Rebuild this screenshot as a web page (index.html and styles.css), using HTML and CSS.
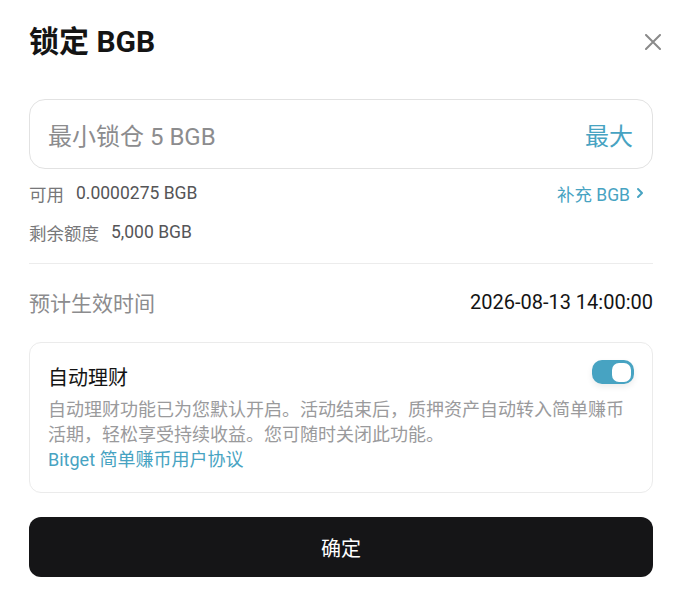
FILE: index.html
```html
<!DOCTYPE html>
<html lang="zh-CN">
<head>
<meta charset="utf-8">
<title>锁定 BGB</title>
<link rel="stylesheet" href="styles.css">
</head>
<body>
<div class="modal">
  <div class="header">
    <h1 class="title">锁定 BGB</h1>
    <button class="close" aria-label="关闭">
      <svg width="16" height="16" viewBox="0 0 16 16"><path d="M1 1L15 15M15 1L1 15" stroke="#8a8a8a" stroke-width="2" stroke-linecap="round"/></svg>
    </button>
  </div>

  <div class="input-box">
    <span class="placeholder">最小锁仓 5 BGB</span>
    <span class="max">最大</span>
  </div>

  <div class="info-row">
    <span class="label">可用</span><span class="value">0.0000275 BGB</span>
    <a class="topup">补充 BGB <svg width="8" height="12" viewBox="0 0 8 12"><path d="M2 2L6 6L2 10" fill="none" stroke="#47a3c2" stroke-width="2" stroke-linecap="round" stroke-linejoin="round"/></svg></a>
  </div>
  <div class="info-row second">
    <span class="label">剩余额度</span><span class="value">5,000 BGB</span>
  </div>

  <div class="divider"></div>

  <div class="time-row">
    <span class="time-label">预计生效时间</span>
    <span class="time-value">2026-08-13 14:00:00</span>
  </div>

  <div class="card">
    <div class="card-head">
      <span class="card-title">自动理财</span>
      <span class="toggle"><span class="knob"></span></span>
    </div>
    <p class="card-desc">自动理财功能已为您默认开启。活动结束后，质押资产自动转入简单赚币活期，轻松享受持续收益。您可随时关闭此功能。</p>
    <a class="card-link">Bitget 简单赚币用户协议</a>
  </div>

  <button class="confirm">确定</button>
</div>
</body>
</html>
```

FILE: styles.css
```css
* { box-sizing: border-box; }
html, body {
  margin: 0;
  padding: 0;
  background: #ffffff;
}
body {
  font-family: Roboto, "Noto Sans CJK SC", sans-serif;
  color: #141414;
}
.modal {
  width: 624px;
  margin-left: 29px;
  padding-top: 24px;
}
.header {
  display: flex;
  justify-content: space-between;
  align-items: center;
  height: 36px;
}
.title {
  margin: 0;
  font-size: 30px;
  font-weight: 700;
  line-height: 36px;
  color: #141414;
}
.close {
  border: 0;
  background: none;
  padding: 0;
  width: 16px;
  height: 16px;
  margin-right: -8px;
  display: flex;
}
.input-box {
  margin-top: 39px;
  height: 70px;
  border: 1px solid #e2e2e2;
  border-radius: 16px;
  display: flex;
  align-items: center;
  justify-content: space-between;
  padding: 0 19px 0 18px;
}
.placeholder {
  font-size: 24px;
  color: #8c8c8e;
}
.max {
  font-size: 24px;
  color: #47a3c2;
}
.info-row {
  margin-top: 12px;
  height: 24px;
  display: flex;
  align-items: center;
  font-size: 17.5px;
}
.info-row.second {
  margin-top: 15px;
}
.label {
  color: #777779;
  margin-right: 12px;
}
.value {
  color: #555557;
}
.topup {
  margin-left: auto;
  margin-right: 9px;
  color: #47a3c2;
  display: flex;
  align-items: center;
  gap: 6px;
}
.divider {
  margin-top: 19px;
  height: 1px;
  background: #ececec;
}
.time-row {
  margin-top: 24px;
  height: 28px;
  display: flex;
  align-items: center;
  justify-content: space-between;
}
.time-label {
  font-size: 21px;
  color: #8c8c8e;
}
.time-value {
  font-size: 20px;
  color: #141414;
}
.card {
  margin-top: 26px;
  border: 1px solid #ebebeb;
  border-radius: 12px;
  padding: 19px 18px 20px 18px;
}
.card-head {
  display: flex;
  justify-content: space-between;
  align-items: center;
  height: 28px;
}
.card-title {
  font-size: 20px;
  color: #141414;
}
.toggle {
  width: 42px;
  height: 24px;
  border-radius: 10px;
  background: #47a3c2;
  display: flex;
  align-items: center;
  justify-content: flex-end;
  padding-right: 3px;
  margin-top: -8px;
  box-shadow: 0 3px 6px rgba(0, 0, 0, 0.08);
}
.knob {
  width: 19px;
  height: 19px;
  border-radius: 7px;
  background: #ffffff;
}
.card-desc {
  margin: 7px 0 0;
  font-size: 18px;
  line-height: 25px;
  color: #9a9a9c;
}
.card-link {
  display: block;
  font-size: 18px;
  line-height: 25px;
  color: #47a3c2;
}
.confirm {
  margin-top: 24px;
  width: 100%;
  height: 60px;
  border: 0;
  border-radius: 12px;
  background: #151517;
  color: #ffffff;
  font-family: Roboto, "Noto Sans CJK SC", sans-serif;
  font-size: 20px;
}
```
